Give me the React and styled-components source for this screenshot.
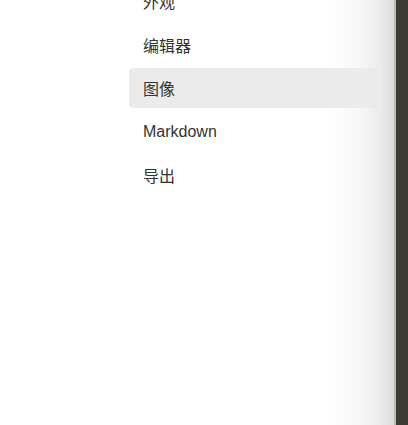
import React from "react";
import styled, { createGlobalStyle } from "styled-components";

const GlobalStyle = createGlobalStyle`
  html, body {
    margin: 0;
    padding: 0;
    background: #fff;
  }
  body {
    font-family: "Liberation Sans", Arial, "Noto Sans CJK SC", sans-serif;
  }
`;

const Screen = styled.div`
  display: flex;
  height: 425px;
  width: 408px;
  overflow: hidden;
`;

const Panel = styled.div`
  flex: 1;
  display: flex;
  overflow: hidden;
  background: linear-gradient(
    to right,
    #ffffff 0,
    #ffffff 330px,
    #f7f7f7 360px,
    #ececec 380px,
    #dcdcdc 394px
  );
  border-right: 2px solid #bdbdbd;
`;

const Divider = styled.div`
  width: 12px;
  background: #3e3b34;
`;

const Menu = styled.ul`
  list-style: none;
  margin: -19px 0 0 129px;
  padding: 0;
  width: 250px;
  display: flex;
  flex-direction: column;
  gap: 3.5px;
`;

const Item = styled.li`
  height: 40px;
  display: flex;
  align-items: center;
  padding-left: 14px;
  border-radius: 4px;
  font-size: 16px;
  color: #333;
  background: ${(props) => (props.active ? "#ebebeb" : "transparent")};
`;

const items = ["外观", "编辑器", "图像", "Markdown", "导出"];

export default function App() {
  return (
    <>
      <GlobalStyle />
      <Screen>
        <Panel>
          <Menu>
            {items.map((label) => (
              <Item key={label} active={label === "图像"}>
                {label}
              </Item>
            ))}
          </Menu>
        </Panel>
        <Divider />
      </Screen>
    </>
  );
}
